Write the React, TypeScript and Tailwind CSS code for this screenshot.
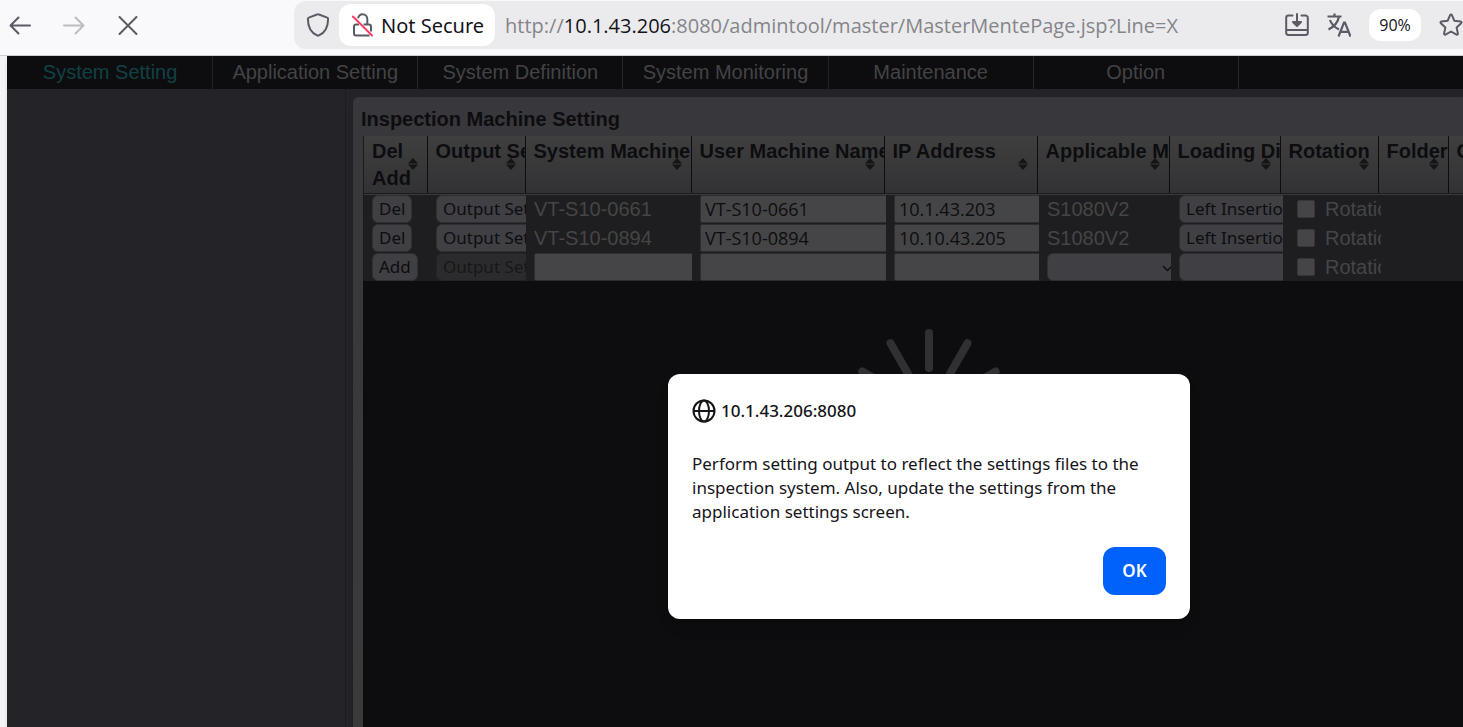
import { ReactNode } from 'react'

interface Machine {
  system: string
  user: string
  ip: string
  model: string
  loading: string
}

const navItems = [
  'System Setting',
  'Application Setting',
  'System Definition',
  'System Monitoring',
  'Maintenance',
  'Option',
]

const columns = [
  { title: 'Del Add', head: 'w-[63px]', body: 'w-[64px]' },
  { title: 'Output Setting', head: 'w-[98px]', body: 'w-[98px]' },
  { title: 'System Machine Name', head: 'w-[166px]', body: 'w-[166px]' },
  { title: 'User Machine Name', head: 'w-[193px]', body: 'w-[194px]' },
  { title: 'IP Address', head: 'w-[153px]', body: 'w-[153px]' },
  { title: 'Applicable Model', head: 'w-[132px]', body: 'w-[132px]' },
  { title: 'Loading Direction', head: 'w-[111px]', body: 'w-[112px]' },
  { title: 'Rotation', head: 'w-[98px]', body: 'w-[98px]' },
  { title: 'Folder', head: 'w-[70px]', body: 'w-[70px]' },
  { title: 'Comment', head: 'w-[160px]', body: 'w-[160px]' },
]

const machines: Machine[] = [
  { system: 'VT-S10-0661', user: 'VT-S10-0661', ip: '10.1.43.203', model: 'S1080V2', loading: 'Left Insertion' },
  { system: 'VT-S10-0894', user: 'VT-S10-0894', ip: '10.10.43.205', model: 'S1080V2', loading: 'Left Insertion' },
]

const buttonClass =
  'block h-7 rounded-md border border-[#2f2e33] bg-[#403f44] px-1.5 font-["Noto_Sans",sans-serif] text-[17px] leading-6 whitespace-nowrap text-[#0d0d0f]'
const inputClass =
  'block h-7 w-[200px] rounded-xs border border-[#2d2c33] bg-[#454547] px-1 font-["Open_Sans",sans-serif] text-lg text-[#0d0d0f]'
const selectClass =
  'block h-7 appearance-none rounded-md border border-[#2f2e33] bg-[#403f44] px-1.5 font-["Noto_Sans",sans-serif] text-[17px] leading-6 text-[#0d0d0f]'

function SortIcon() {
  return (
    <svg className="absolute top-[22px] right-[9px] h-3 w-[10px]" viewBox="0 0 10 12" fill="#151517">
      <path d="M5 0l5 5.4H0z" />
      <path d="M5 12l5-5.4H0z" />
    </svg>
  )
}

function Toolbar() {
  return (
    <header className="flex h-14 items-start border-b border-[#cfcfd3] bg-[#f9f9fb] text-[#5b5b66]">
      <div className="flex h-[50px] w-[294px] shrink-0 items-center gap-[30px] pl-2">
        <button type="button" aria-label="Back" className="h-6 w-6">
          <svg viewBox="0 0 24 24" fill="none" stroke="currentColor" strokeWidth="2" strokeLinecap="round" strokeLinejoin="round">
            <path d="M22 12.5H2.5M10.5 4.5l-8 8 8 8" />
          </svg>
        </button>
        <button type="button" aria-label="Forward" className="h-6 w-6 text-[#bcbcc2]">
          <svg viewBox="0 0 24 24" fill="none" stroke="currentColor" strokeWidth="2" strokeLinecap="round" strokeLinejoin="round">
            <path d="M2 12.5h19.5M13.5 4.5l8 8-8 8" />
          </svg>
        </button>
        <button type="button" aria-label="Stop" className="h-6 w-6">
          <svg viewBox="0 0 24 24" fill="none" stroke="currentColor" strokeWidth="2" strokeLinecap="round">
            <path d="M3.5 4l17 17M20.5 4l-17 17" />
          </svg>
        </button>
      </div>
      <div className="mt-px flex h-12 min-w-0 flex-1 items-center overflow-hidden rounded-l-xl bg-[#ebebed]">
        <button type="button" aria-label="Tracking protection" className="ml-3 h-6 w-6 shrink-0">
          <svg viewBox="0 0 24 24" fill="none" stroke="currentColor" strokeWidth="2" strokeLinejoin="round">
            <path d="M12 1.2c.4 0 .7.1 1 .3l8.200 3.100c.6.2.9.7.9 1.300 0 7-2.600 13.400-9.200 16.500-.6.3-1.200.3-1.800 0C4.500 19.300 1.900 12.900 1.900 5.900c0-.6.3-1.100.9-1.300L11 1.500c.3-.2.6-.3 1-.3z" />
          </svg>
        </button>
        <button
          type="button"
          className='ml-[9px] flex h-[42px] shrink-0 items-center gap-[7px] rounded-xl bg-white pr-[11px] pl-3 font-["Noto_Sans",sans-serif] text-xl whitespace-nowrap text-[#15141a]'
        >
          <svg className="h-6 w-[23px] text-[#5b5b66]" viewBox="0 0 23 24" fill="none" strokeWidth="2">
            <path d="M7 5.200C7.700 2.700 9.300 1.200 11.500 1.200c3 0 4.800 2.200 4.800 5V11M8 11.500H5C3.700 11.500 3 12.300 3 13.500v7c0 1.300.8 2 2 2h13.500M12.500 11.500h5.200c1.500 0 2.300.8 2.300 2v5" stroke="currentColor" />
            <path d="M2 3.500l19 19" stroke="#ff3b64" strokeLinecap="round" />
          </svg>
          <span className="pt-0.5">Not Secure</span>
        </button>
        <div className='ml-[10px] min-w-0 flex-1 overflow-hidden pt-0.5 font-["Open_Sans",sans-serif] text-xl whitespace-nowrap text-[#85858a]'>
          http://<span className="text-[#15141a]">10.1.43.206</span>:8080/admintool/master/MasterMentePage.jsp?Line=X
        </div>
        <button type="button" aria-label="Install app" className="h-6 w-6 shrink-0">
          <svg viewBox="0 0 24 24" fill="none" stroke="currentColor" strokeWidth="2" strokeLinecap="round" strokeLinejoin="round">
            <path d="M7.500 2.500H3.500C2.200 2.500 1.200 3.500 1.200 4.800v15c0 1.300 1 2.300 2.300 2.300h17c1.300 0 2.300-1 2.300-2.300v-15c0-1.300-1-2.300-2.300-2.300h-4M1.500 17h21M12 1v10" />
            <path d="M8 9l4 4 4-4z" fill="currentColor" />
          </svg>
        </button>
        <button type="button" aria-label="Translate" className="ml-[18px] h-6 w-6 shrink-0">
          <svg viewBox="0 0 24 24" fill="none" stroke="currentColor" strokeWidth="2.200">
            <path d="M.5 3.500h14M7.500.5v3M3 7c1.500 4.500 5 7.500 9 9.500M12 3.500c-1 6-4.500 10-10.500 13" />
            <path d="M11.500 23.500l5.500-14h1l5.500 14M13.500 18.800h8" />
          </svg>
        </button>
        <button
          type="button"
          className='ml-[18px] h-8 w-[52px] shrink-0 rounded-xl bg-white font-["Open_Sans",sans-serif] text-base text-[#15141a]'
        >
          90%
        </button>
        <button type="button" aria-label="Bookmark this page" className="ml-[18px] h-6 w-6 shrink-0">
          <svg viewBox="0 0 24 24" fill="none" stroke="currentColor" strokeWidth="2" strokeLinejoin="round">
            <path d="M11.100 2.200c.4-.8 1.400-.8 1.800 0l2.500 5.600 6.200.7c.9.100 1.200 1.100.6 1.700l-4.600 4.200 1.300 6.100c.2.900-.7 1.500-1.400 1.100L12 18.500l-5.500 3.100c-.7.4-1.600-.2-1.400-1.100l1.300-6.100-4.600-4.200c-.6-.6-.3-1.600.6-1.700l6.200-.7z" />
          </svg>
        </button>
      </div>
    </header>
  )
}

function Cell({ children }: { children?: ReactNode }) {
  return <td className="h-[29px] overflow-hidden p-0 pl-2 align-middle whitespace-nowrap">{children}</td>
}

function RotationBox() {
  return (
    <label className="flex items-center gap-[10px] pl-1.5 leading-7">
      <input type="checkbox" className="h-[18px] w-[18px] shrink-0 appearance-none rounded-xs border border-[#36353a] bg-[#454547]" />
      Rotation
    </label>
  )
}

function MachineTable() {
  return (
    <div className="overflow-hidden border-l border-[#1b1b1d] bg-[#0d0d0f]">
      <table className="w-[1244px] table-fixed border-collapse">
        <thead>
          <tr className="bg-linear-to-b from-[#3f3f40] to-[#323234]">
            {columns.map((col) => (
              <th
                key={col.title}
                className={`${col.head} relative h-[57px] overflow-hidden border-r border-b border-r-[#0d0d0f] border-b-[#1b1b1d] p-0 pt-0.5 pl-2 text-left align-top text-xl leading-[27px] font-bold text-[#0d0d0f] ${
                  col.title === 'Del Add' ? '' : 'whitespace-nowrap'
                }`}
              >
                {col.title}
                <SortIcon />
              </th>
            ))}
          </tr>
        </thead>
      </table>
      <table className="w-[1247px] table-fixed border-collapse border-t border-[#39393b] bg-[#1e1e20] text-xl leading-7 text-[#454547]">
        <colgroup>
          {columns.map((col) => (
            <col key={col.title} className={col.body} />
          ))}
        </colgroup>
        <tbody>
          {machines.map((m) => (
            <tr key={m.system}>
              <Cell><button type="button" className={buttonClass}>Del</button></Cell>
              <Cell><button type="button" className={buttonClass}>Output Setting</button></Cell>
              <Cell>{m.system}</Cell>
              <Cell><input aria-label="User Machine Name" defaultValue={m.user} className={inputClass} /></Cell>
              <Cell><input aria-label="IP Address" defaultValue={m.ip} className={inputClass} /></Cell>
              <Cell>{m.model}</Cell>
              <Cell>
                <select aria-label="Loading Direction" className={`${selectClass} w-[160px]`}>
                  <option>{m.loading}</option>
                </select>
              </Cell>
              <Cell><RotationBox /></Cell>
              <Cell />
              <Cell />
            </tr>
          ))}
          <tr>
            <Cell><button type="button" className={buttonClass}>Add</button></Cell>
            <Cell>
              <button type="button" disabled className={`${buttonClass} opacity-40`}>Output Setting</button>
            </Cell>
            <Cell><input aria-label="System Machine Name" className={inputClass} /></Cell>
            <Cell><input aria-label="User Machine Name" className={inputClass} /></Cell>
            <Cell><input aria-label="IP Address" className={inputClass} /></Cell>
            <Cell>
              <div className="relative w-[130px]">
                <select aria-label="Applicable Model" className={`${selectClass} w-full`} />
                <svg className="pointer-events-none absolute top-3 right-1 h-[7px] w-[11px]" viewBox="0 0 11 7" fill="none" stroke="#0d0d0f" strokeWidth="1.500">
                  <path d="M1 1l4.500 4.500L10 1" />
                </svg>
              </div>
            </Cell>
            <Cell><select aria-label="Loading Direction" className={`${selectClass} w-[160px]`} /></Cell>
            <Cell><RotationBox /></Cell>
            <Cell />
            <Cell />
          </tr>
        </tbody>
      </table>
    </div>
  )
}

function Spinner() {
  return (
    <svg className="absolute top-[328px] left-[847px] h-[164px] w-[164px]" viewBox="-82 -82 164 164" stroke="#303032" strokeWidth="8" strokeLinecap="round">
      {Array.from({ length: 12 }, (_, i) => (
        <line key={i} x1="0" y1="-77" x2="0" y2="-42" transform={`rotate(${i * 30})`} />
      ))}
    </svg>
  )
}

function AlertDialog() {
  return (
    <div
      role="alertdialog"
      aria-labelledby="alert-title"
      aria-describedby="alert-text"
      className='absolute top-[374px] left-[668px] w-[522px] rounded-xl bg-white p-6 font-["Noto_Sans",sans-serif] text-[#15141a] shadow-lg'
    >
      <div className="flex h-[26px] items-center gap-[5px]">
        <svg className="h-6 w-6" viewBox="0 0 24 24" fill="none" stroke="currentColor" strokeWidth="2">
          <circle cx="12" cy="12" r="10.500" />
          <ellipse cx="12" cy="12" rx="5" ry="10.500" />
          <path d="M1.500 12h21" />
        </svg>
        <h2 id="alert-title" className="text-[17px] font-medium">10.1.43.206:8080</h2>
      </div>
      <p id="alert-text" className="mt-7 text-[17px] leading-6">
        Perform setting output to reflect the settings files to the inspection system. Also, update the settings from the
        application settings screen.
      </p>
      <div className="mt-[23px] flex justify-end">
        <button type="button" className="h-12 w-[63px] rounded-xl bg-[#0062fa] text-[17px] font-semibold text-white">
          OK
        </button>
      </div>
    </div>
  )
}

export default function App() {
  return (
    <div className='relative flex min-h-screen flex-col overflow-hidden bg-[#f4f4f7] font-["Liberation_Sans",Arial,sans-serif]'>
      <Toolbar />
      <div className="ml-[7px] flex flex-1 flex-col bg-[#242327] shadow-md">
        <nav className="flex h-[33px] bg-[#0d0d0f] pl-px text-xl">
          {navItems.map((item, i) => (
            <a
              key={item}
              href="#"
              className={`w-[14.1%] border-r border-[#242426] text-center leading-8 whitespace-nowrap ${
                i === 0 ? 'text-[#0f4245]' : 'text-[#434345]'
              }`}
            >
              {item}
            </a>
          ))}
        </nav>
        <div className="flex flex-1">
          <aside className="w-[339px] shrink-0 border-r border-[#1d1c20]" />
          <main className="mt-2 ml-[7px] flex min-w-0 flex-1 flex-col rounded-tl-md bg-linear-to-b from-[#38373b] to-[#3a3a3b] pl-[10px] shadow-md">
            <h1 className="-ml-0.5 h-[39px] pt-2 text-xl leading-7 font-bold text-[#0d0d0f]">Inspection Machine Setting</h1>
            <div className="flex-1 bg-[#0d0d0f]">
              <MachineTable />
            </div>
          </main>
        </div>
      </div>
      <Spinner />
      <AlertDialog />
    </div>
  )
}
